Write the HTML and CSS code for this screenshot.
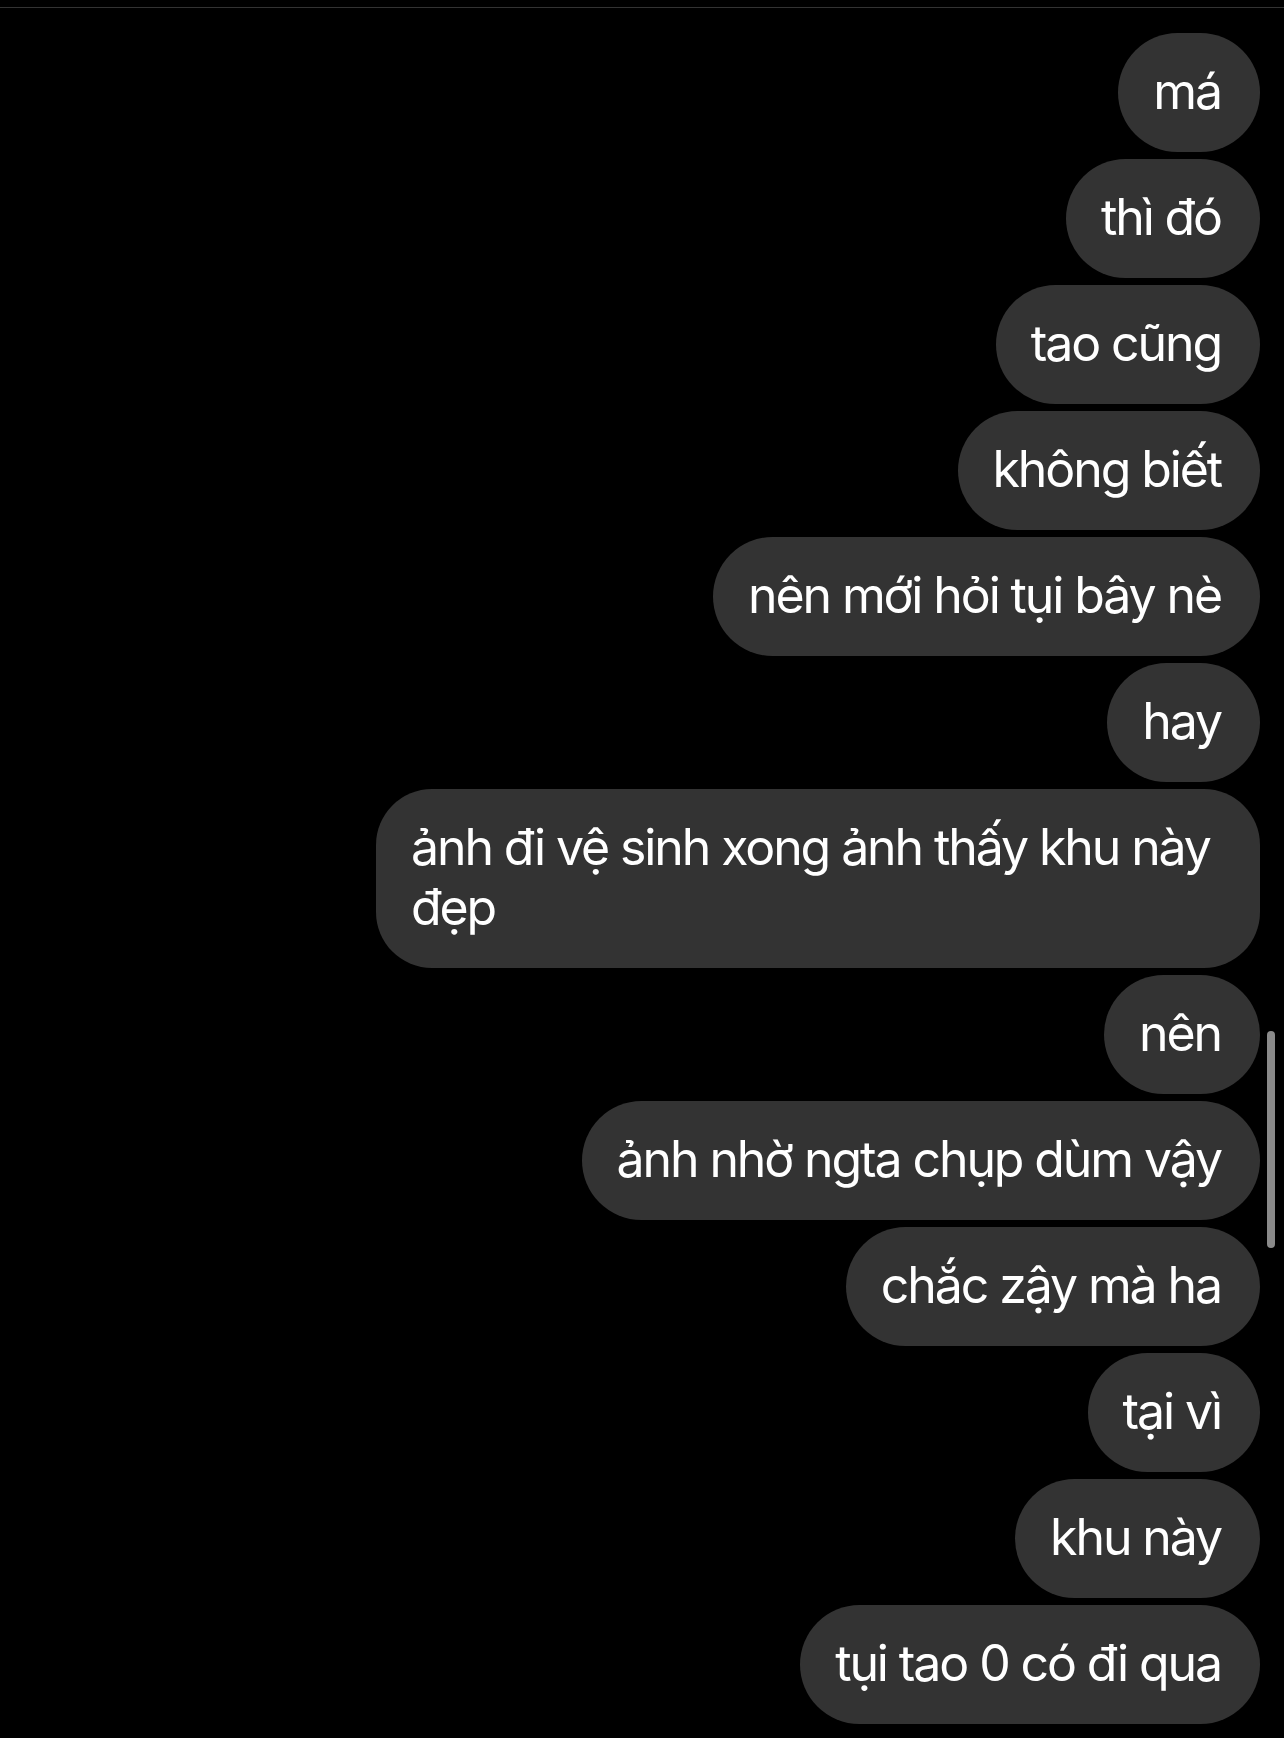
FILE: index.html
```html
<!DOCTYPE html>
<html lang="vi">
<head>
<meta charset="utf-8">
<title>Chat</title>
<link rel="stylesheet" href="styles.css">
</head>
<body>
<div class="screen">
  <div class="topline"></div>
  <div class="thread">
    <div class="bubble">má</div>
    <div class="bubble">thì đó</div>
    <div class="bubble">tao cũng</div>
    <div class="bubble">không biết</div>
    <div class="bubble">nên mới hỏi tụi bây nè</div>
    <div class="bubble">hay</div>
    <div class="bubble wide">ảnh đi vệ sinh xong ảnh thấy khu này đẹp</div>
    <div class="bubble">nên</div>
    <div class="bubble">ảnh nhờ ngta chụp dùm vậy</div>
    <div class="bubble">chắc zậy mà ha</div>
    <div class="bubble">tại vì</div>
    <div class="bubble">khu này</div>
    <div class="bubble">tụi tao 0 có đi qua</div>
  </div>
  <div class="scrollbar"></div>
</div>
</body>
</html>
```
FILE: styles.css
```css
html, body {
  margin: 0;
  padding: 0;
  background: #000;
}
.screen {
  position: relative;
  width: 1284px;
  height: 1738px;
  overflow: hidden;
  background: #000;
  font-family: Inter, "Noto Sans", "Liberation Sans", sans-serif;
}
.topline {
  height: 1px;
  margin-top: 7px;
  background: #333;
}
.thread {
  display: flex;
  flex-direction: column;
  align-items: flex-end;
  gap: 7px;
  padding: 25px 24px 0 0;
}
.bubble {
  background: #333333;
  color: #fff;
  font-size: 50px;
  line-height: 60px;
  letter-spacing: -2.1px;
  padding: 28px 39px 31px 35px;
  border-radius: 60px;
  max-width: 810px;
  box-sizing: content-box;
}
.bubble.wide {
  width: 810px;
  border-radius: 56px;
}
.scrollbar {
  position: absolute;
  left: 1267px;
  top: 1031px;
  width: 8px;
  height: 217px;
  border-radius: 4px;
  background: #8a8a8a;
}
```
